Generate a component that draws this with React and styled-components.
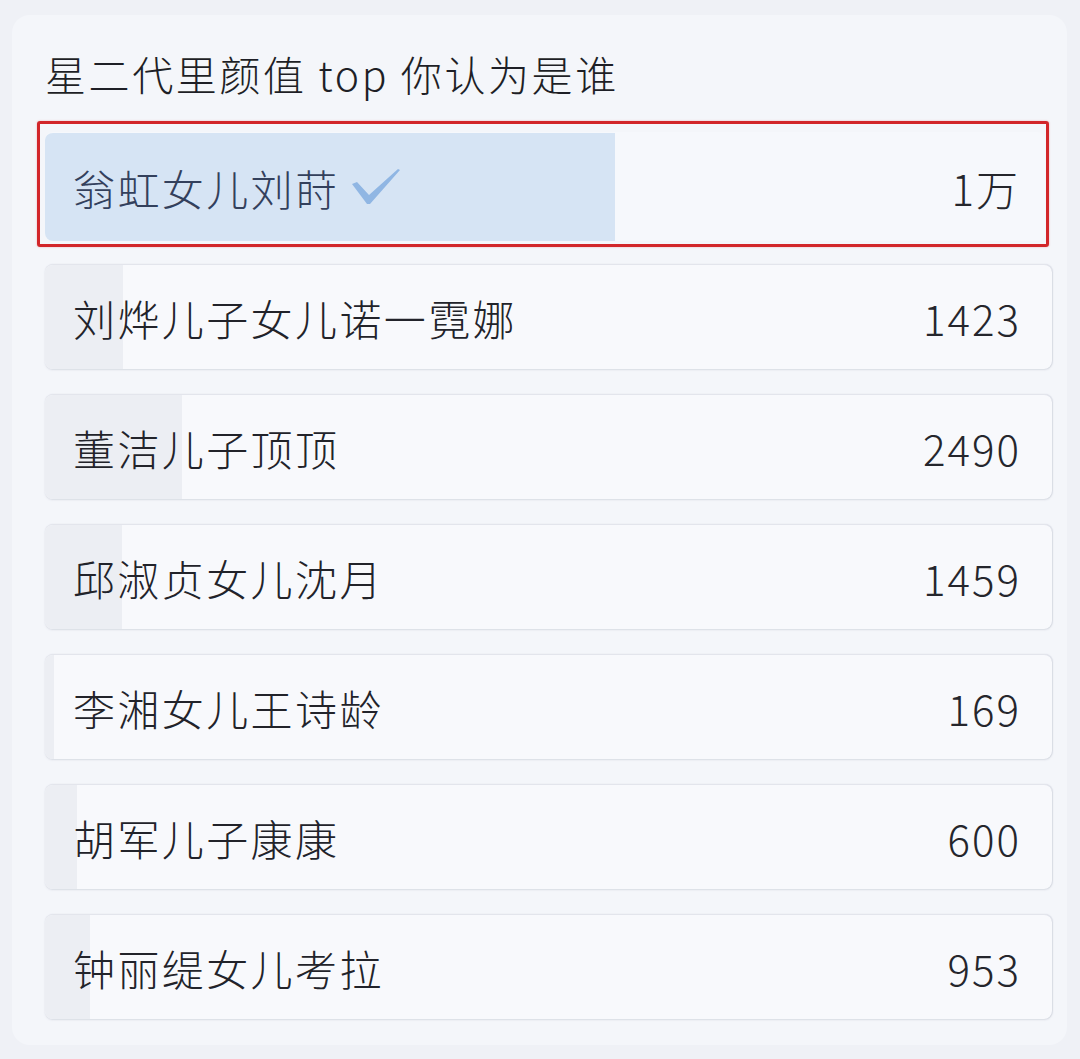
import React from "react";
import styled, { createGlobalStyle } from "styled-components";

const Global = createGlobalStyle`
  html, body { margin: 0; padding: 0; background: #eff1f6; }
  body { font-family: "Noto Sans CJK SC", "Noto Sans", sans-serif; color: #22232a; }
`;

const Page = styled.div`
  width: 1080px;
  height: 1059px;
  box-sizing: border-box;
  padding: 15px 13px 14px 12px;
  background: #eff1f6;
`;

const Card = styled.div`
  height: 100%;
  box-sizing: border-box;
  background: #f4f6fa;
  border-radius: 18px;
  padding: 32px 15px 26px 33px;
  display: flex;
  flex-direction: column;
`;

const Title = styled.h1`
  margin: 0 0 22px 0;
  font-size: 41px;
  line-height: 52px;
  font-weight: 300;
  letter-spacing: 2.6px;
  color: #1e1f26;
  white-space: nowrap;
`;

const List = styled.div`
  display: flex;
  flex-direction: column;
  gap: 25px;
`;

const Highlight = styled.div`
  margin: 0 3px -8px -8px;
  padding: 8px 1px 3px 5px;
  border: 3px solid #d2262a;
  border-radius: 3px;
  box-shadow: 0 0 2px rgba(210, 38, 42, 0.35);
`;

const Row = styled.div`
  position: relative;
  height: ${(p) => (p.$tall ? 109 : 105)}px;
  border-radius: 8px;
  background: ${(p) => (p.$selected ? "#f6f8fc" : "#f8f9fc")};
  border-top: 1px solid ${(p) => (p.$selected ? "transparent" : "#e3e5ec")};
  box-shadow: ${(p) =>
    p.$selected ? "none" : "0 1px 2px rgba(170, 175, 190, 0.35), 1px 0 1px rgba(200, 204, 215, 0.5)"};
  overflow: hidden;
  box-sizing: border-box;
`;

const Fill = styled.div`
  position: absolute;
  left: 0;
  top: 0;
  bottom: 0;
  background: ${(p) => (p.$selected ? "#d6e4f4" : "#eceef3")};
`;

const Content = styled.div`
  position: relative;
  height: 100%;
  display: flex;
  align-items: center;
  justify-content: space-between;
  padding: 0 ${(p) => (p.$selected ? 25 : 31)}px 0 28px;
`;

const Label = styled.span`
  display: flex;
  align-items: center;
  gap: 12px;
  font-size: 42px;
  font-weight: 300;
  letter-spacing: 2.4px;
  color: ${(p) => (p.$selected ? "#33405c" : "#22232a")};
`;

const Count = styled.span`
  font-size: 42px;
  font-weight: 300;
  color: #25262c;
  letter-spacing: 2px;
`;

const Check = () => (
  <svg width="50" height="38" viewBox="0 0 50 38">
    <path d="M1 16 L6 14 L18 27 L47 1 L49 2 L19 36 L16 36 Z" fill="#90b6e3" />
  </svg>
);

const options = [
  { name: "翁虹女儿刘莳", count: "1万", share: 57, selected: true },
  { name: "刘烨儿子女儿诺一霓娜", count: "1423", share: 7.7 },
  { name: "董洁儿子顶顶", count: "2490", share: 13.6 },
  { name: "邱淑贞女儿沈月", count: "1459", share: 7.6 },
  { name: "李湘女儿王诗龄", count: "169", share: 0.9 },
  { name: "胡军儿子康康", count: "600", share: 3.2 },
  { name: "钟丽缇女儿考拉", count: "953", share: 4.5 },
];

function Option({ o }) {
  const row = (
    <Row $selected={o.selected} $tall={o.selected}>
      <Fill $selected={o.selected} style={{ width: `${o.share}%` }} />
      <Content $selected={o.selected}>
        <Label $selected={o.selected}>
          {o.name}
          {o.selected && <Check />}
        </Label>
        <Count>{o.count}</Count>
      </Content>
    </Row>
  );
  return o.selected ? <Highlight>{row}</Highlight> : row;
}

export default function App() {
  return (
    <>
      <Global />
      <Page>
        <Card>
          <Title>星二代里颜值 top 你认为是谁</Title>
          <List>
            {options.map((o) => (
              <Option key={o.name} o={o} />
            ))}
          </List>
        </Card>
      </Page>
    </>
  );
}
